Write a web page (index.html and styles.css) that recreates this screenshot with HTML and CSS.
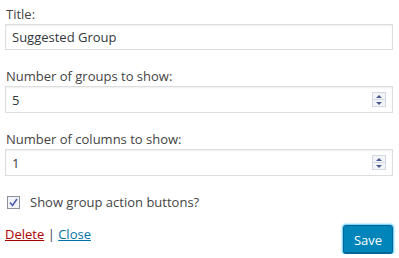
FILE: index.html
```html
<!DOCTYPE html>
<html lang="en">
<head>
    <meta charset="UTF-8">
    <title>Suggested Group Widget</title>
    <link rel="stylesheet" href="styles.css">
</head>
<body>

    <div class="widget-form">
        <p class="field">
            <label for="title">Title:</label>
            <input class="text-input" id="title" type="text" value="Suggested Group">
        </p>

        <p class="field">
            <label for="groups">Number of groups to show:</label>
            <span class="number-wrap">
                <input class="text-input" id="groups" type="text" value="5">
                <span class="spinner"><span class="up"></span><span class="down"></span></span>
            </span>
        </p>

        <p class="field">
            <label for="columns">Number of columns to show:</label>
            <span class="number-wrap">
                <input class="text-input" id="columns" type="text" value="1">
                <span class="spinner"><span class="up"></span><span class="down"></span></span>
            </span>
        </p>

        <p class="check-row">
            <span class="checkbox"><svg width="9" height="9" viewBox="0 0 9 9"><path d="M1 4.5 L3.5 7.5 L8 1" fill="none" stroke="#4b5ca8" stroke-width="1.6"/></svg></span>
            <label>Show group action buttons?</label>
        </p>

        <!-- Footer actions -->
        <div class="actions">
            <div class="links">
                <a class="delete" href="#">Delete</a> | <a class="close" href="#">Close</a>
            </div>
            <button class="save">Save</button>
        </div>
    </div>

</body>
</html>
```

FILE: styles.css
```css
body {
    margin: 0;
    padding: 0;
    background-color: #fff;
    font-family: 'Open Sans', sans-serif;
    font-size: 13px;
    color: #444;
}

.widget-form {
    padding: 5px 6px 0 5px;
}

.field {
    margin: 0 0 17px;
}

.field label {
    display: block;
    padding-left: 1px;
    line-height: 19px;
}

.text-input {
    display: block;
    box-sizing: border-box;
    width: 388px;
    height: 26px;
    margin: 0;
    padding: 0 6px;
    border: 1px solid #ddd;
    box-shadow: inset 0 1px 2px rgba(0, 0, 0, 0.07);
    font-family: inherit;
    font-size: 13px;
    color: #32373c;
    background: #fff;
}

#groups, #columns {
    height: 27px;
}

.number-wrap {
    display: block;
    position: relative;
}

.spinner {
    position: absolute;
    right: 7px;
    top: 6px;
    width: 14px;
    height: 15px;
    display: flex;
    flex-direction: column;
    border: 1px solid #d4d8e2;
    box-sizing: border-box;
    background: #f3f4f8;
}

.spinner .up, .spinner .down {
    flex: 1;
    position: relative;
}

.spinner .up {
    border-bottom: 1px solid #d4d8e2;
}

.spinner .up::after, .spinner .down::after {
    content: "";
    position: absolute;
    left: 3px;
    border-left: 3px solid transparent;
    border-right: 3px solid transparent;
}

.spinner .up::after {
    top: 2px;
    border-bottom: 3px solid #4a5a8c;
}

.spinner .down::after {
    top: 2px;
    border-top: 3px solid #4a5a8c;
}

.check-row {
    display: flex;
    align-items: center;
    margin: -6px 0 0;
    padding: 6px 0 0 2px;
    line-height: 19px;
}

.checkbox {
    display: flex;
    align-items: center;
    justify-content: center;
    width: 13px;
    height: 13px;
    box-sizing: border-box;
    border: 1px solid #8f8f9d;
    background: #f2f3f8;
    margin-right: 10px;
}

.actions {
    display: flex;
    justify-content: space-between;
    align-items: flex-start;
    margin-top: 13px;
}

.links {
    padding-top: 0;
    color: #444;
}

.links a {
    text-decoration: underline;
}

.delete {
    color: #a00;
}

.close {
    color: #0073aa;
}

.save {
    width: 50px;
    height: 29px;
    padding: 0;
    border: 1px solid #006799;
    border-radius: 3px;
    background: #0085ba;
    color: #fff;
    font-family: inherit;
    font-size: 13px;
    box-shadow: 0 0 2px 1px #5bc5f2, inset 0 -1px 0 #006799;
    cursor: pointer;
}
```
